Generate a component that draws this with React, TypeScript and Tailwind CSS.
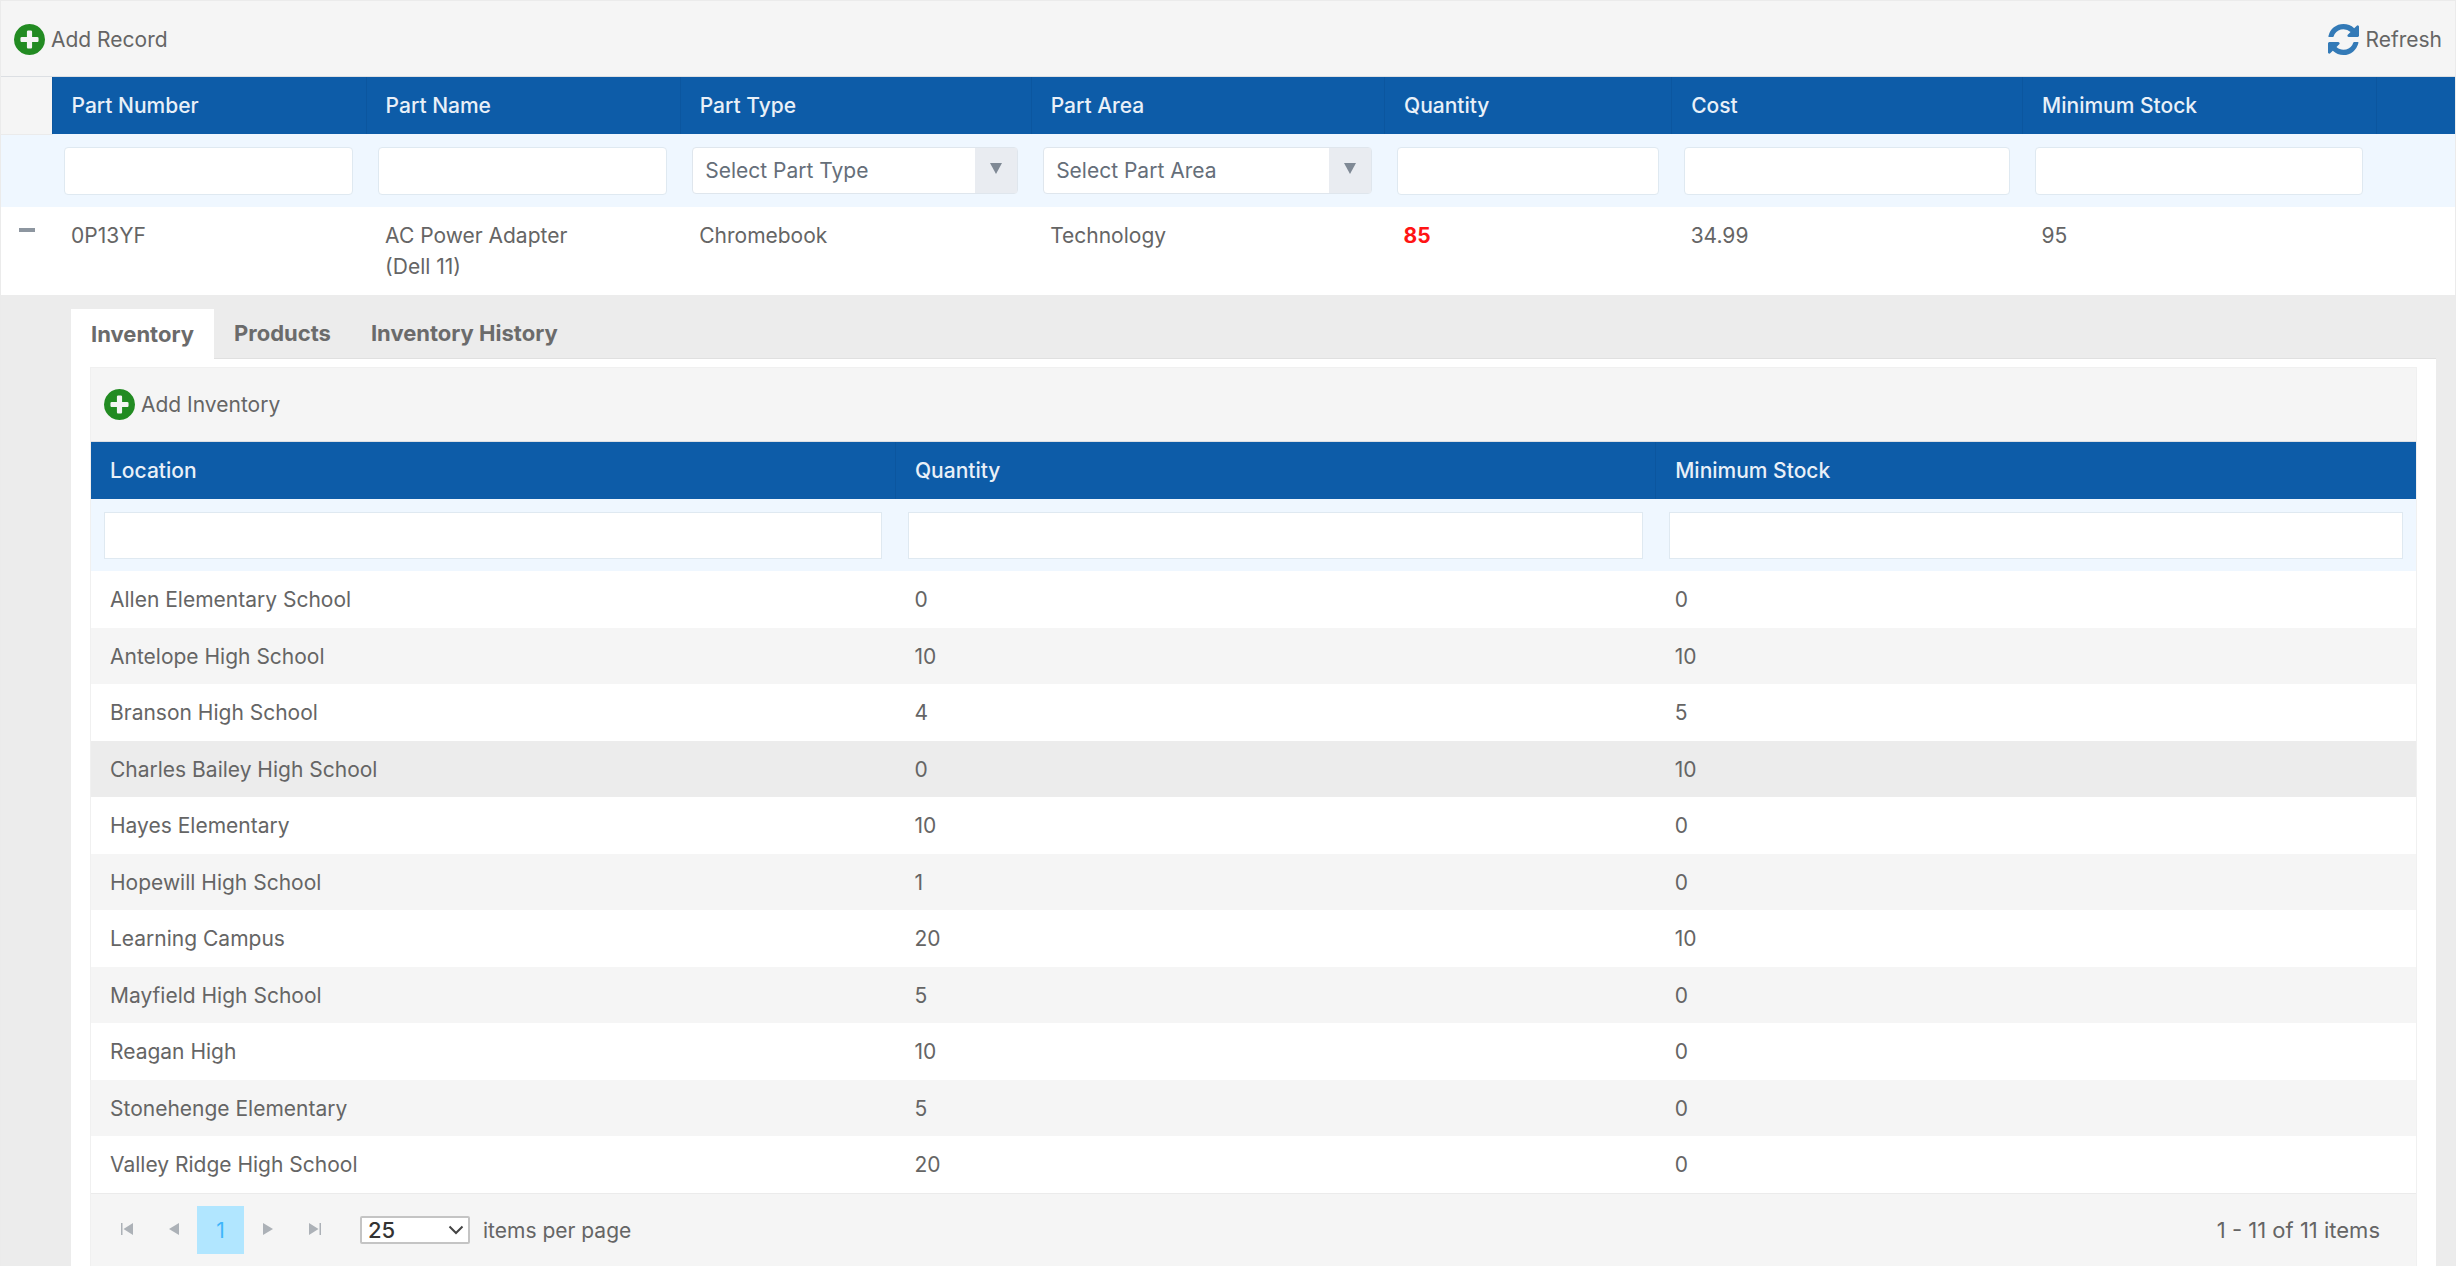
import React from "react";

type Stock = { location: string; quantity: number; minimum: number };

const inventory: Stock[] = [
  { location: "Allen Elementary School", quantity: 0, minimum: 0 },
  { location: "Antelope High School", quantity: 10, minimum: 10 },
  { location: "Branson High School", quantity: 4, minimum: 5 },
  { location: "Charles Bailey High School", quantity: 0, minimum: 10 },
  { location: "Hayes Elementary", quantity: 10, minimum: 0 },
  { location: "Hopewill High School", quantity: 1, minimum: 0 },
  { location: "Learning Campus", quantity: 20, minimum: 10 },
  { location: "Mayfield High School", quantity: 5, minimum: 0 },
  { location: "Reagan High", quantity: 10, minimum: 0 },
  { location: "Stonehenge Elementary", quantity: 5, minimum: 0 },
  { location: "Valley Ridge High School", quantity: 20, minimum: 0 },
];

const hoveredLocation = "Charles Bailey High School";

function PlusCircle() {
  return (
    <svg viewBox="0 128 1536 1536" className="size-[31px] fill-[#228b22]" aria-hidden="true">
      <path d="M1216 960v-128q0-26-19-45t-45-19h-256v-256q0-26-19-45t-45-19h-128q-26 0-45 19t-19 45v256h-256q-26 0-45 19t-19 45v128q0 26 19 45t45 19h256v256q0 26 19 45t45 19h128q26 0 45-19t19-45v-256h256q26 0 45-19t19-45zm320-64q0 209-103 385.5t-279.5 279.5-385.5 103-385.5-103-279.5-279.5-103-385.5 103-385.5 279.5-279.5 385.5-103 385.5 103 279.5 279.5 103 385.5z" />
    </svg>
  );
}

function RefreshIcon() {
  return (
    <svg viewBox="0 128 1536 1536" className="size-[31px] fill-[#337ab7]" aria-hidden="true">
      <path d="M1511 1056q0 5-1 7-64 268-268 434.5t-478 166.5q-146 0-282.5-55t-243.5-157l-129 129q-19 19-45 19t-45-19-19-45v-448q0-26 19-45t45-19h448q26 0 45 19t19 45-19 45l-137 137q71 66 161 102t187 36q134 0 250-65t186-179q11-17 53-117 8-23 30-23h192q13 0 22.5 9.5t9.5 22.5zm25-800v448q0 26-19 45t-45 19h-448q-26 0-45-19t-19-45 19-45l138-138q-148-137-349-137-134 0-250 65t-186 179q-11 17-53 117-8 23-30 23h-199q-13 0-22.5-9.5t-9.5-22.5v-7q65-268 270-434.5t480-166.5q146 0 284 55.5t245 156.5l130-129q19-19 45-19t45 19 19 45z" />
    </svg>
  );
}

function HeadCell({ children }: { children?: React.ReactNode }) {
  return (
    <th
      scope="col"
      className="border-l border-[#0b569f] bg-[#0d5ca8] px-[19px] text-left font-medium text-[#e9f0f8] first:border-l-0"
    >
      {children}
    </th>
  );
}

function FilterInput({ label, rounded }: { label: string; rounded?: boolean }) {
  return (
    <input
      type="text"
      aria-label={label}
      className={
        rounded
          ? "block h-12 w-full rounded-sm border border-[#dfe9f1] bg-white px-3 outline-none"
          : "block h-[47px] w-full border border-[#dfe9f1] bg-white px-3 outline-none"
      }
    />
  );
}

function FilterSelect({ label, placeholder }: { label: string; placeholder: string }) {
  return (
    <div className="relative">
      <select
        aria-label={label}
        className="block h-[47px] w-full appearance-none rounded-sm border border-[#dfe6ed] bg-white pr-12 pl-3 text-[#656e79] outline-none"
      >
        <option>{placeholder}</option>
      </select>
      <span className="pointer-events-none absolute inset-y-px right-px flex w-[42px] items-center justify-center bg-[#e9ecf1]">
        <svg viewBox="0 0 12 11" className="mb-1 h-[11px] w-3 fill-[#7f8995]" aria-hidden="true">
          <path d="M0 0h12L6 11z" />
        </svg>
      </span>
    </div>
  );
}

function PagerButton({ label, path }: { label: string; path: string }) {
  return (
    <button type="button" aria-label={label} className="flex h-12 w-[47px] items-center justify-center pb-0.5">
      <svg viewBox="0 0 12 12" className="size-3 fill-[#acb1b7]" aria-hidden="true">
        <path d={path} />
      </svg>
    </button>
  );
}

function InventoryGrid() {
  return (
    <div className="border border-b-0 border-[#f0f0f0]">
      <div className="flex h-[74px] items-center border-b border-[#dcdfe3] bg-[#f5f5f5] px-[13px]">
        <button type="button" className="flex items-center gap-1.5">
          <PlusCircle />
          Add Inventory
        </button>
      </div>
      <table className="w-full table-fixed border-collapse">
        <colgroup>
          <col className="w-[34.6%]" />
          <col className="w-[32.7%]" />
          <col />
        </colgroup>
        <thead>
          <tr className="h-[57px]">
            <HeadCell>Location</HeadCell>
            <HeadCell>Quantity</HeadCell>
            <HeadCell>Minimum Stock</HeadCell>
          </tr>
          <tr className="h-[72px] bg-[#eff7ff]">
            {["Location", "Quantity", "Minimum Stock"].map((name) => (
              <td key={name} className="px-[13px]">
                <FilterInput label={`Filter by ${name}`} />
              </td>
            ))}
          </tr>
        </thead>
        <tbody>
          {inventory.map((row) => (
            <tr
              key={row.location}
              className={
                row.location === hoveredLocation
                  ? "bg-[#ececec] odd:h-[57px] even:h-14"
                  : "odd:h-[57px] even:h-14 even:bg-[#f5f5f5]"
              }
            >
              <td className="px-[19px]">{row.location}</td>
              <td className="px-[19px]">{row.quantity}</td>
              <td className="px-[19px]">{row.minimum}</td>
            </tr>
          ))}
        </tbody>
      </table>
      <div className="flex items-center border-t border-[#ebebeb] bg-[#f5f5f5] py-3 pr-9 pl-3">
        <PagerButton label="First page" path="M0 0h1.5v12H0zM12 0v12L2.500 6z" />
        <PagerButton label="Previous page" path="M11 0v12L1 6z" />
        <button type="button" aria-current="page" className="h-12 w-[47px] bg-[#b1e6ff] text-[#3fb5fb]">
          1
        </button>
        <PagerButton label="Next page" path="M1 0v12l10-6z" />
        <PagerButton label="Last page" path="M10.500 0H12v12h-1.500zM0 0v12l9.500-6z" />
        <label className="ml-[22px] flex items-center gap-[13px]">
          <span className="relative">
            <select
              aria-label="Items per page"
              className="block h-7 w-[110px] appearance-none rounded-xs border-2 border-[#c4c4c4] bg-white pl-1.5 text-[22px] leading-6 font-medium text-[#333] outline-none"
            >
              <option>25</option>
            </select>
            <svg
              viewBox="0 0 16 10"
              className="pointer-events-none absolute top-[9px] right-1.5 h-2.5 w-4 fill-none stroke-[#444] stroke-2"
              aria-hidden="true"
            >
              <path d="M1.500 1.500 8 8l6.500-6.500" />
            </svg>
          </span>
          items per page
        </label>
        <span className="ml-auto text-[22px]">1 - 11 of 11 items</span>
      </div>
    </div>
  );
}

export default function App() {
  return (
    <div className="min-h-screen bg-white pr-0.5 font-['Inter',sans-serif] text-[21px] leading-[31px] text-[#656565]">
      <div className="border border-b-0 border-[#ebebeb]">
        <div className="flex h-[76px] items-center justify-between border-b border-[#dcdfe3] bg-[#f5f5f5] px-[13px] pt-0.5">
          <button type="button" className="flex items-center gap-1.5">
            <PlusCircle />
            Add Record
          </button>
          <button type="button" className="flex items-center gap-1.5">
            <RefreshIcon />
            Refresh
          </button>
        </div>

        <table className="w-full table-fixed border-collapse">
          <colgroup>
            <col className="w-[51px]" />
            <col className="w-[12.8%]" />
            <col className="w-[12.8%]" />
            <col className="w-[14.3%]" />
            <col className="w-[14.4%]" />
            <col className="w-[11.7%]" />
            <col className="w-[14.3%]" />
            <col />
            <col className="w-[79px]" />
          </colgroup>
          <thead>
            <tr className="h-[57px]">
              <td className="border-b border-[#ebebeb] bg-[#f5f5f5]" />
              <HeadCell>Part Number</HeadCell>
              <HeadCell>Part Name</HeadCell>
              <HeadCell>Part Type</HeadCell>
              <HeadCell>Part Area</HeadCell>
              <HeadCell>Quantity</HeadCell>
              <HeadCell>Cost</HeadCell>
              <HeadCell>Minimum Stock</HeadCell>
              <HeadCell />
            </tr>
            <tr className="h-[73px] bg-[#eff7ff]">
              <td />
              <td className="pr-[13px] pl-3"><FilterInput rounded label="Filter by Part Number" /></td>
              <td className="pr-[13px] pl-3"><FilterInput rounded label="Filter by Part Name" /></td>
              <td className="pr-[13px] pl-3"><FilterSelect label="Filter by Part Type" placeholder="Select Part Type" /></td>
              <td className="pr-[13px] pl-3"><FilterSelect label="Filter by Part Area" placeholder="Select Part Area" /></td>
              <td className="pr-[13px] pl-3"><FilterInput rounded label="Filter by Quantity" /></td>
              <td className="pr-[13px] pl-3"><FilterInput rounded label="Filter by Cost" /></td>
              <td className="pr-[13px] pl-3"><FilterInput rounded label="Filter by Minimum Stock" /></td>
              <td />
            </tr>
          </thead>
          <tbody>
            <tr className="h-[88px] align-top">
              <td className="pt-5 pl-[18px]">
                <button type="button" aria-label="Collapse row" className="block py-px">
                  <span className="block h-1 w-4 bg-[#8d96a0]" />
                </button>
              </td>
              <td className="px-[19px] pt-[13px]">0P13YF</td>
              <td className="px-[19px] pt-[13px]">AC Power Adapter<br />(Dell 11)</td>
              <td className="px-[19px] pt-[13px]">Chromebook</td>
              <td className="px-[19px] pt-[13px]">Technology</td>
              <td className="px-[19px] pt-[13px] font-bold text-[#ff1414]">85</td>
              <td className="px-[19px] pt-[13px]">34.99</td>
              <td className="px-[19px] pt-[13px]">95</td>
              <td />
            </tr>
          </tbody>
        </table>

        <div className="bg-[#ececec] pt-3.5 pr-[19px] pl-[70px]">
          <div role="tablist" className="flex h-[50px] text-[22px] font-bold text-[#6b6b6b]">
            <button type="button" role="tab" aria-selected="true" className="bg-white px-5">Inventory</button>
            <button type="button" role="tab" aria-selected="false" className="border-b border-[#e0e0e0] px-5">Products</button>
            <button type="button" role="tab" aria-selected="false" className="border-b border-[#e0e0e0] px-5">Inventory History</button>
            <span className="grow border-b border-[#e0e0e0]" />
          </div>
          <div role="tabpanel" className="bg-white px-[19px] pt-2">
            <InventoryGrid />
          </div>
        </div>
      </div>
    </div>
  );
}
